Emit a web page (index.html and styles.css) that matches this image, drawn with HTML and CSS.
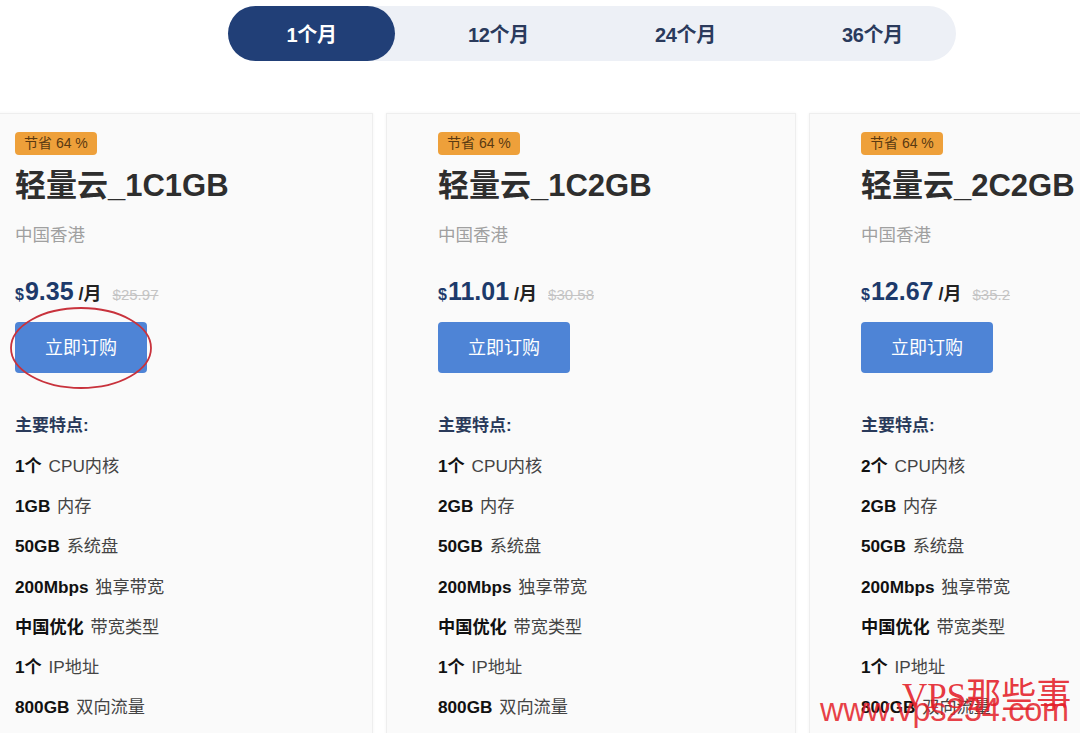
FILE: index.html
```html
<!DOCTYPE html>
<html lang="zh-CN">
<head>
<meta charset="utf-8">
<title>轻量云套餐</title>
<link rel="stylesheet" href="styles.css">
</head>
<body>
<div class="page">
  <div class="tabs-row">
    <div class="tabs">
      <div class="tab active">1个月</div>
      <div class="tab">12个月</div>
      <div class="tab">24个月</div>
      <div class="tab">36个月</div>
    </div>
  </div>

  <div class="cards">
    <div class="card">
      <span class="badge">节省 64 %</span>
      <h2 class="title">轻量云_1C1GB</h2>
      <div class="loc">中国香港</div>
      <div class="price"><span class="cur">$</span><span class="amt">9.35</span><span class="per">/月</span><span class="old">$25.97</span></div>
      <div class="btn-wrap">
        <button class="btn">立即订购</button>
        <svg class="circle-mark" width="146" height="86" viewBox="0 0 146 86"><ellipse cx="73" cy="43" rx="70" ry="40" fill="none" stroke="#c8323c" stroke-width="1.8"/></svg>
      </div>
      <div class="feat-head">主要特点:</div>
      <ul class="feats">
        <li><b>1个</b> CPU内核</li>
        <li><b>1GB</b> 内存</li>
        <li><b>50GB</b> 系统盘</li>
        <li><b>200Mbps</b> 独享带宽</li>
        <li><b>中国优化</b> 带宽类型</li>
        <li><b>1个</b> IP地址</li>
        <li><b>800GB</b> 双向流量</li>
      </ul>
    </div>

    <div class="card">
      <span class="badge">节省 64 %</span>
      <h2 class="title">轻量云_1C2GB</h2>
      <div class="loc">中国香港</div>
      <div class="price"><span class="cur">$</span><span class="amt">11.01</span><span class="per">/月</span><span class="old">$30.58</span></div>
      <div class="btn-wrap">
        <button class="btn">立即订购</button>
      </div>
      <div class="feat-head">主要特点:</div>
      <ul class="feats">
        <li><b>1个</b> CPU内核</li>
        <li><b>2GB</b> 内存</li>
        <li><b>50GB</b> 系统盘</li>
        <li><b>200Mbps</b> 独享带宽</li>
        <li><b>中国优化</b> 带宽类型</li>
        <li><b>1个</b> IP地址</li>
        <li><b>800GB</b> 双向流量</li>
      </ul>
    </div>

    <div class="card">
      <span class="badge">节省 64 %</span>
      <h2 class="title">轻量云_2C2GB</h2>
      <div class="loc">中国香港</div>
      <div class="price"><span class="cur">$</span><span class="amt">12.67</span><span class="per">/月</span><span class="old">$35.2</span></div>
      <div class="btn-wrap">
        <button class="btn">立即订购</button>
      </div>
      <div class="feat-head">主要特点:</div>
      <ul class="feats">
        <li><b>2个</b> CPU内核</li>
        <li><b>2GB</b> 内存</li>
        <li><b>50GB</b> 系统盘</li>
        <li><b>200Mbps</b> 独享带宽</li>
        <li><b>中国优化</b> 带宽类型</li>
        <li><b>1个</b> IP地址</li>
        <li><b>800GB</b> 双向流量</li>
      </ul>
    </div>
  </div>

  <div class="watermark">
    <span class="wm-cn">VPS那些事</span>
    <span class="wm-url">www.vps234.com</span>
  </div>
</div>
</body>
</html>
```

FILE: styles.css
```css
* { box-sizing: border-box; }
html, body {
  margin: 0;
  padding: 0;
  background: #ffffff;
  overflow: hidden;
}
body {
  width: 1080px;
  height: 733px;
  font-family: "Liberation Sans", "Noto Sans CJK SC", sans-serif;
  color: #333;
}
.page {
  position: relative;
  width: 1080px;
  height: 733px;
  overflow: hidden;
}

/* Tabs */
.tabs-row {
  padding-top: 6px;
  padding-left: 228px;
}
.tabs {
  display: flex;
  gap: 20px;
  width: 728px;
  height: 55px;
  border-radius: 28px;
  background: #edf0f6;
}
.tab {
  width: 167px;
  height: 55px;
  border-radius: 28px;
  display: flex;
  align-items: center;
  justify-content: center;
  font-size: 20px;
  font-weight: bold;
  color: #2a3a5c;
  letter-spacing: -0.3px;
}
.tab.active {
  background: #213f77;
  color: #ffffff;
}

/* Cards */
.cards {
  display: flex;
  gap: 13px;
  margin-top: 52px;
  margin-left: -37px;
}
.card {
  flex: 0 0 410px;
  height: 640px;
  background: #fafafa;
  border: 1px solid #eeeeee;
  box-shadow: 0 0 3px rgba(0,0,0,0.05);
  padding: 18px 20px 0 51px;
}
.badge {
  display: inline-block;
  height: 23px;
  line-height: 23px;
  padding: 0 9px;
  border-radius: 4px;
  background: #eea03a;
  color: #5a3a12;
  font-size: 14px;
}
.title {
  margin: 13px 0 0;
  font-size: 31px;
  line-height: 36px;
  font-weight: bold;
  color: #2e2e2e;
  white-space: nowrap;
}
.loc {
  margin-top: 19px;
  font-size: 17.5px;
  line-height: 24px;
  color: #a0a0a0;
}
.price {
  margin-top: 27px;
  height: 34px;
  line-height: 34px;
  white-space: nowrap;
  display: flex;
  align-items: baseline;
}
.cur {
  font-size: 16px;
  font-weight: bold;
  color: #1d3a6b;
  margin-right: 1px;
}
.amt {
  font-size: 25px;
  font-weight: bold;
  color: #1d3a6b;
}
.per {
  font-size: 18px;
  font-weight: bold;
  color: #222;
  margin-left: 5px;
}
.old {
  font-size: 15px;
  color: #c4c4c4;
  text-decoration: line-through;
  margin-left: 11px;
}
.btn-wrap {
  position: relative;
  margin-top: 14px;
  width: 132px;
  height: 51px;
}
.btn {
  display: block;
  width: 132px;
  height: 51px;
  border: none;
  border-radius: 4px;
  background: #4e84d6;
  color: #ffffff;
  font-family: "Liberation Sans", "Noto Sans CJK SC", sans-serif;
  font-size: 18px;
  padding: 0 0 3px;
}
.circle-mark {
  position: absolute;
  left: -7px;
  top: -17px;
  pointer-events: none;
}
.feat-head {
  margin-top: 33px;
  height: 40px;
  line-height: 40px;
  font-size: 17px;
  font-weight: bold;
  color: #2a3a5a;
}
.feats {
  list-style: none;
  margin: 0;
  padding: 0;
}
.feats li {
  height: 40.2px;
  line-height: 40.2px;
  font-size: 17.2px;
  color: #444;
  white-space: nowrap;
}
.feats li b {
  color: #111;
  margin-right: 2px;
}

/* Watermark */
.watermark {
  position: absolute;
  left: 820px;
  top: 677px;
  width: 260px;
  height: 56px;
  pointer-events: none;
}
.wm-cn {
  position: absolute;
  left: 82px;
  top: 0;
  font-family: "Liberation Serif", "Noto Sans CJK SC", serif;
  font-size: 35px;
  line-height: 40px;
  color: rgba(228, 30, 40, 0.9);
  white-space: nowrap;
}
.wm-url {
  position: absolute;
  left: 0;
  top: 14px;
  font-family: "Liberation Sans", sans-serif;
  font-size: 32.5px;
  line-height: 38px;
  color: rgba(228, 30, 40, 0.85);
  white-space: nowrap;
  letter-spacing: -0.3px;
}
```
